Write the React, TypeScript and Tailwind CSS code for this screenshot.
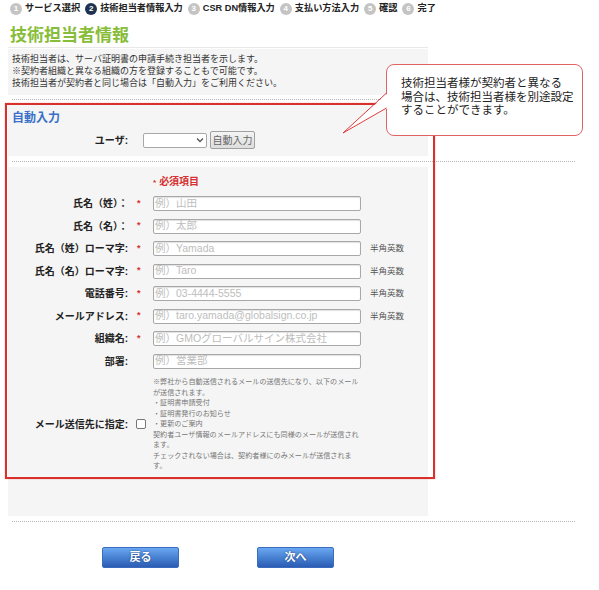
import React from 'react';

const steps = [
    { n: 1, label: 'サービス選択' },
    { n: 2, label: '技術担当者情報入力', active: true },
    { n: 3, label: 'CSR DN情報入力' },
    { n: 4, label: '支払い方法入力' },
    { n: 5, label: '確認' },
    { n: 6, label: '完了' },
];

interface Field {
    label: string;
    placeholder: string;
    required: boolean;
    hint?: string;
}

const fields: Field[] = [
    { label: '氏名（姓）：', placeholder: '例）山田', required: true },
    { label: '氏名（名）：', placeholder: '例）太郎', required: true },
    { label: '氏名（姓）ローマ字:', placeholder: '例）Yamada', required: true, hint: '半角英数' },
    { label: '氏名（名）ローマ字:', placeholder: '例）Taro', required: true, hint: '半角英数' },
    { label: '電話番号:', placeholder: '例）03-4444-5555', required: true, hint: '半角英数' },
    { label: 'メールアドレス:', placeholder: '例）taro.yamada@globalsign.co.jp', required: true, hint: '半角英数' },
    { label: '組織名:', placeholder: '例）GMOグローバルサイン株式会社', required: true },
    { label: '部署:', placeholder: '例）営業部', required: false },
];

const noteLines = [
    '※弊社から自動送信されるメールの送信先になり、以下のメール',
    'が送信されます。',
    '・証明書申請受付',
    '・証明書発行のお知らせ',
    '・更新のご案内',
    '契約者ユーザ情報のメールアドレスにも同様のメールが送信され',
    'ます。',
    'チェックされない場合は、契約者様にのみメールが送信されま',
    'す。',
];

function Dotted() {
    return <div className="ml-[12px] w-[563px] border-t border-dotted border-[#b5b5b5]" />;
}

function BlueButton({ label }: { label: string }) {
    return (
        <button className="w-[77px] h-[21px] rounded-[2px] border border-[#3a6bbd] bg-gradient-to-b from-[#6aa8f2] to-[#2a5cb3] text-white text-[11px] font-bold [text-shadow:0_0_2px_#1d3f7a]">
            {label}
        </button>
    );
}

export default function App() {
    return (
        <div className="relative w-[599px] h-[590px] overflow-hidden bg-white text-[#333] font-['Liberation_Sans','Noto_Sans_CJK_JP',sans-serif]">
            {/* steps */}
            <div className="flex items-center gap-[5px] pl-[10px] h-[18px]">
                {steps.map((s) => (
                    <div key={s.n} className="flex items-center gap-[3px]">
                        <span className={`w-[12px] h-[12px] rounded-full flex items-center justify-center text-[8px] font-bold text-white ${s.active ? 'bg-[#1f3350]' : 'bg-[#c4c4c4]'}`}>
                            {s.n}
                        </span>
                        <span className="text-[9.2px] font-bold text-[#222] whitespace-nowrap">{s.label}</span>
                    </div>
                ))}
            </div>

            <h1 className="pl-[10px] mt-[7px] text-[17px] leading-[22px] font-bold text-[#88bd3a]">技術担当者情報</h1>
            <div className="ml-[8px] w-[420px] border-b border-[#e8e8e8]" />

            {/* info */}
            <div className="ml-[8px] w-[420px] mt-[1px] bg-[#f5f5f5] pl-[4px] pt-[4px] pb-[6px] text-[9px] leading-[12px] text-[#333]">
                <p>技術担当者は、サーバ証明書の申請手続き担当者を示します。</p>
                <p>※契約者組織と異なる組織の方を登録することもで可能です。</p>
                <p>技術担当者が契約者と同じ場合は「自動入力」をご利用ください。</p>
            </div>

            <div className="mt-[4px]"><Dotted /></div>

            {/* auto input */}
            <div className="ml-[8px] w-[420px] mt-[3px] bg-[#f5f5f5] pt-[8px] pb-[7px]">
                <h2 className="pl-[4px] text-[12px] leading-[14px] font-bold text-[#3a70c8]">自動入力</h2>
                <div className="flex items-center h-[18px] mt-[6px]">
                    <span className="w-[120px] text-right text-[10px] font-bold text-[#222]">ユーザ:</span>
                    <div className="relative ml-[15px] w-[64px] h-[15px]">
                        <select className="appearance-none w-full h-full bg-white border border-[#a8a8a8] rounded-[2px]" />
                        <svg className="absolute right-[3px] top-[4px]" width="8" height="6" viewBox="0 0 8 6">
                            <path d="M1 1.5 L4 4.5 L7 1.5" fill="none" stroke="#555" strokeWidth="1.3" />
                        </svg>
                    </div>
                    <button className="ml-[3px] w-[45px] h-[18px] border border-[#a0a0a0] rounded-[2px] bg-gradient-to-b from-[#f4f4f4] to-[#dedede] text-[10px] text-[#666]">
                        自動入力
                    </button>
                </div>
            </div>

            <div className="mt-[5px]"><Dotted /></div>

            {/* form */}
            <div className="ml-[8px] w-[420px] mt-[5px] bg-[#f5f5f5] pt-[9px] pb-[44px]">
                <div className="pl-[145px] text-[10px] leading-[12px] font-bold text-[#d63030]">
                    <span className="text-[8px] mr-[3px]">*</span>必須項目
                </div>
                <div className="flex flex-col gap-[7.5px] mt-[7px]">
                    {fields.map((f) => (
                        <div key={f.label} className="flex items-center h-[15px]">
                            <span className="w-[120px] text-right text-[10px] font-bold text-[#222] whitespace-nowrap">{f.label}</span>
                            <span className="w-[25px] pl-[9px] text-[9px] font-bold text-[#d63030]">{f.required ? '*' : ''}</span>
                            <input
                                readOnly
                                placeholder={f.placeholder}
                                className="w-[208px] h-[15px] bg-white border border-[#a8a8a8] rounded-[2px] shadow-[inset_0_1px_1px_rgba(0,0,0,0.12)] px-[1px] text-[10.5px] placeholder:text-[#bdbdbd]"
                            />
                            {f.hint && <span className="ml-[9px] text-[8.5px] text-[#555]">{f.hint}</span>}
                        </div>
                    ))}
                </div>
                <div className="flex items-center mt-[8.5px]">
                    <span className="w-[120px] text-right text-[10px] font-bold text-[#222] whitespace-nowrap">メール送信先に指定:</span>
                    <span className="w-[25px] pl-[8px] flex">
                        <span className="w-[10px] h-[10px] border border-[#777] rounded-[2px] bg-white" />
                    </span>
                    <div className="text-[7.1px] leading-[10.5px] text-[#777] whitespace-nowrap">
                        {noteLines.map((l, i) => <div key={i}>{l}</div>)}
                    </div>
                </div>
            </div>

            <div className="mt-[5px]"><Dotted /></div>

            <div className="flex mt-[25px] pl-[102px] gap-[78px]">
                <BlueButton label="戻る" />
                <BlueButton label="次へ" />
            </div>

            {/* annotation: red frame */}
            <div className="absolute left-[5px] top-[103px] w-[430px] h-[376px] border-2 border-[#d8302c] shadow-[0_0_1px_#f08080]" />

            {/* annotation: callout */}
            <div className="absolute left-[386px] top-[64px] w-[197px] h-[72px] bg-white border border-[#e06464] rounded-[8px] pl-[14px] pt-[12px] text-[11.5px] leading-[13.5px] text-[#222] whitespace-nowrap">
                <div>技術担当者様が契約者と異なる</div>
                <div>場合は、技術担当者様を別途設定</div>
                <div>することができます。</div>
            </div>
            <svg className="absolute left-[340px] top-[90px]" width="50" height="50" viewBox="0 0 50 50">
                <polygon points="48,3 3,43 48,18" fill="#fff" />
                <polyline points="46.5,3 3,43 46.5,18" fill="none" stroke="#e03a3a" strokeWidth="1" />
            </svg>
        </div>
    );
}
